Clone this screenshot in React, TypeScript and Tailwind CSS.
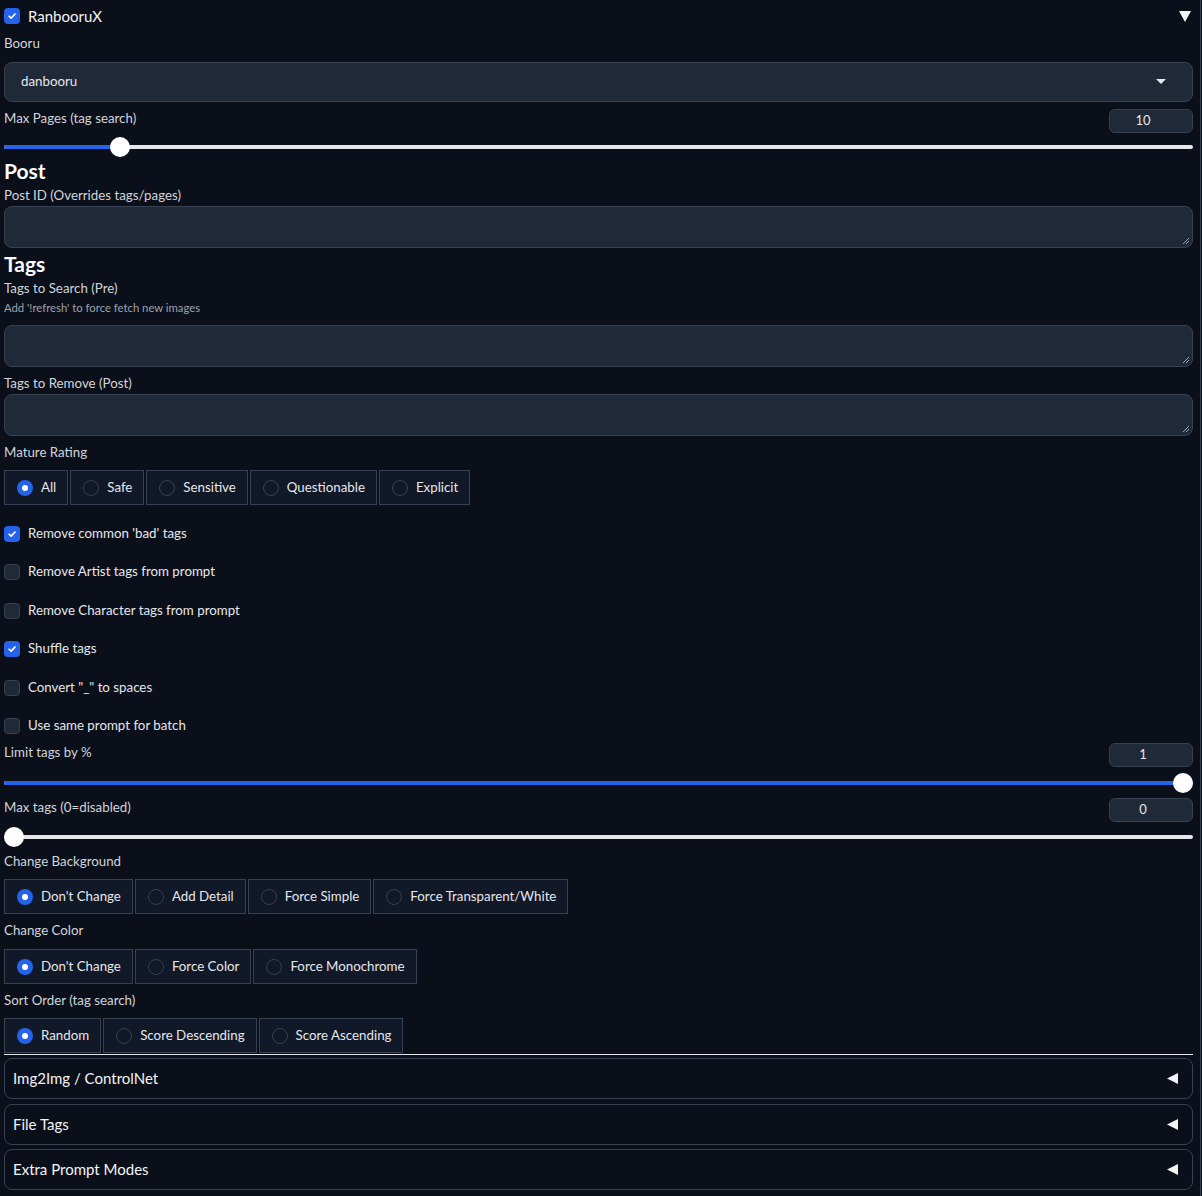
import React from "react";

const font = { fontFamily: "Lato, 'Noto Sans', sans-serif" };

function Label({ children, className = "" }: { children: React.ReactNode; className?: string }) {
  return <div className={"h-[20px] text-[13.3px] leading-[20px] text-[#d1d5db] " + className}>{children}</div>;
}

function Checkbox({ checked }: { checked: boolean }) {
  return checked ? (
    <div className="w-[16px] h-[16px] rounded-[4px] bg-[#2563eb] flex items-center justify-center shrink-0">
      <svg width="10" height="10" viewBox="0 0 12 12">
        <path d="M2.5 6.3 L5 8.6 L9.6 3.6" stroke="white" strokeWidth="2" fill="none" strokeLinecap="round" strokeLinejoin="round" />
      </svg>
    </div>
  ) : (
    <div className="w-[16px] h-[16px] rounded-[4px] bg-[#1f2937] border border-[#374151] shrink-0" />
  );
}

function CheckRow({ checked, label, className = "" }: { checked: boolean; label: string; className?: string }) {
  return (
    <div className={"h-[20px] flex items-center gap-[8px] " + className}>
      <Checkbox checked={checked} />
      <span className="text-[13.3px] text-[#e5e7eb]">{label}</span>
    </div>
  );
}

function Slider({ pct, className = "" }: { pct: number; className?: string }) {
  return (
    <div className={"relative h-[20px] " + className}>
      <div className="absolute left-0 right-0 top-[8px] h-[4px] rounded-full bg-[#e5e7eb]" />
      <div className="absolute left-0 top-[8px] h-[4px] rounded-full bg-[#2563eb]" style={{ width: `${pct}%` }} />
      <div
        className="absolute top-0 w-[20px] h-[20px] rounded-full bg-white"
        style={{ left: `calc(${pct}% - ${(pct / 100) * 20}px)` }}
      />
    </div>
  );
}

function NumBox({ value }: { value: string }) {
  return (
    <div className="w-[84px] h-[24px] rounded-[6px] bg-[#1f2937] border border-[#374151] flex items-center justify-center pr-[16px] text-[13px] text-[#e5e7eb]">
      {value}
    </div>
  );
}

function SliderBlock({
  label,
  value,
  pct,
  className = "",
  sliderClass = "mt-[4px]",
}: {
  label: string;
  value: string;
  pct: number;
  className?: string;
  sliderClass?: string;
}) {
  return (
    <div className={className}>
      <div className="flex justify-between items-start h-[25px]">
        <Label>{label}</Label>
        <div className="mt-[1px]">
          <NumBox value={value} />
        </div>
      </div>
      <Slider pct={pct} className={sliderClass} />
    </div>
  );
}

function Radio({ options, className = "" }: { options: string[]; className?: string }) {
  return (
    <div className={"flex gap-[2px] " + className}>
      {options.map((o, i) => (
        <div
          key={o}
          className="h-[35px] flex items-center gap-[8px] pl-[12px] pr-[11px] border border-[#374151] bg-[#111827] text-[13.3px] text-[#e5e7eb]"
        >
          {i === 0 ? (
            <div className="w-[16px] h-[16px] rounded-full bg-[#2563eb] flex items-center justify-center">
              <div className="w-[6px] h-[6px] rounded-full bg-white" />
            </div>
          ) : (
            <div className="w-[16px] h-[16px] rounded-full bg-[#111827] border border-[#374151]" />
          )}
          <span>{o}</span>
        </div>
      ))}
    </div>
  );
}

function TextArea({ className = "" }: { className?: string }) {
  return (
    <div className={"relative h-[42px] rounded-[8px] bg-[#1f2937] border border-[#374151] " + className}>
      <svg className="absolute right-[2px] bottom-[2px]" width="8" height="8" viewBox="0 0 8 8">
        <path d="M7 1 L1 7 M7 4 L4 7" stroke="#9ca3af" strokeWidth="1" />
      </svg>
    </div>
  );
}

function Accordion({ label, className = "" }: { label: string; className?: string }) {
  return (
    <div className={"h-[41px] rounded-[8px] border border-[#374151] flex items-center justify-between pl-[8px] pr-[14px] " + className}>
      <span className="text-[15px] text-[#f3f4f6]">{label}</span>
      <svg width="11" height="11" viewBox="0 0 11 11">
        <path d="M11 0 L11 11 L0 5.5 Z" fill="#f3f4f6" />
      </svg>
    </div>
  );
}

export default function App() {
  return (
    <div className="min-h-[1196px] w-[1202px] bg-[#0b0f19] flex" style={font}>
      <div className="flex-1 pl-[4px] pr-[7px] flex flex-col">
        {/* header */}
        <div className="mt-[4px] h-[24px] flex items-center justify-between">
          <div className="flex items-center gap-[8px]">
            <Checkbox checked />
            <span className="text-[15px] text-[#f3f4f6]">RanbooruX</span>
          </div>
          <svg width="12" height="11" viewBox="0 0 12 11" className="mr-[2px]">
            <path d="M0 0 L12 0 L6 11 Z" fill="#f3f4f6" />
          </svg>
        </div>

        <Label className="mt-[5px]">Booru</Label>
        <div className="mt-[9px] h-[40px] rounded-[8px] bg-[#1f2937] border border-[#374151] flex items-center justify-between pl-[16px] pr-[26px]">
          <span className="text-[13.3px] text-[#e5e7eb]">danbooru</span>
          <svg width="10" height="6" viewBox="0 0 10 6">
            <path d="M0 0 L10 0 L5 5 Z" fill="#e5e7eb" />
          </svg>
        </div>

        <SliderBlock className="mt-[6px]" label="Max Pages (tag search)" value="10" pct={9.07} />

        <div className="h-[28px] text-[21px] leading-[28px] font-bold text-[#f9fafb]">Post</div>
        <Label>Post ID (Overrides tags/pages)</Label>
        <TextArea className="mt-[1px]" />

        <div className="mt-[2px] h-[28px] text-[21px] leading-[28px] font-bold text-[#f9fafb]">Tags</div>
        <Label>Tags to Search (Pre)</Label>
        <div className="mt-[2px] h-[16px] text-[11.3px] leading-[16px] text-[#9ca3af]">Add '!refresh' to force fetch new images</div>
        <TextArea className="mt-[9px]" />
        <Label className="mt-[6px]">Tags to Remove (Post)</Label>
        <TextArea className="mt-[1px]" />

        <Label className="mt-[6px]">Mature Rating</Label>
        <Radio className="mt-[8px]" options={["All", "Safe", "Sensitive", "Questionable", "Explicit"]} />

        <CheckRow className="mt-[19px]" checked label="Remove common 'bad' tags" />
        <CheckRow className="mt-[18px]" checked={false} label="Remove Artist tags from prompt" />
        <CheckRow className="mt-[19px]" checked={false} label="Remove Character tags from prompt" />
        <CheckRow className="mt-[18px]" checked label="Shuffle tags" />
        <CheckRow className="mt-[19px]" checked={false} label={'Convert "_" to spaces'} />
        <CheckRow className="mt-[18px]" checked={false} label="Use same prompt for batch" />

        <SliderBlock className="mt-[6px]" sliderClass="mt-[6px]" label="Limit tags by %" value="1" pct={100} />
        <SliderBlock className="mt-[4px]" sliderClass="mt-[5px]" label="Max tags (0=disabled)" value="0" pct={0} />

        <Label className="mt-[4px]">Change Background</Label>
        <Radio className="mt-[8px]" options={["Don't Change", "Add Detail", "Force Simple", "Force Transparent/White"]} />
        <Label className="mt-[6px]">Change Color</Label>
        <Radio className="mt-[9px]" options={["Don't Change", "Force Color", "Force Monochrome"]} />
        <Label className="mt-[6px]">Sort Order (tag search)</Label>
        <Radio className="mt-[8px]" options={["Random", "Score Descending", "Score Ascending"]} />
        <div className="mt-[1px] h-[1px] bg-[#e5e7eb]" />

        <Accordion className="mt-[3px]" label="Img2Img / ControlNet" />
        <Accordion className="mt-[5px]" label="File Tags" />
        <Accordion className="mt-[4px]" label="Extra Prompt Modes" />
      </div>
      <div className="w-[1px] bg-[#374151] mr-[1px]" />
    </div>
  );
}
